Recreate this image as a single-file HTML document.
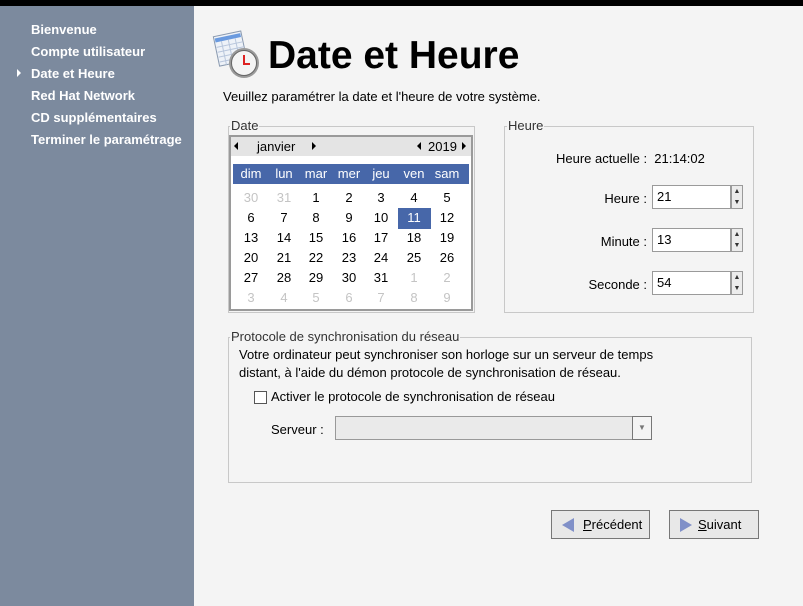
<!DOCTYPE html>
<html><head><meta charset="utf-8"><style>
*{margin:0;padding:0;box-sizing:border-box}
body{width:803px;height:606px;overflow:hidden;background:#f4f4f4;font-family:"Liberation Sans","DejaVu Sans",sans-serif;font-size:13px;color:#000;position:relative}
.a{position:absolute}
#top{left:0;top:0;width:803px;height:6px;background:#000}
#side{left:0;top:6px;width:194px;height:600px;background:#7c8a9e}
.si{position:absolute;left:31px;color:#fff;font-weight:bold;font-size:13px;font-family:"Liberation Sans",sans-serif}
.fr{position:absolute;border:1px solid #c8c8c8}
.lg{position:absolute;background:#f4f4f4;padding:0 1px;color:#333;font-size:13px;line-height:14px}
.c{position:absolute;width:32px;text-align:center;font-size:13px;line-height:20px}
.g{color:#c4c4c4}
.sp{position:absolute;left:652px;width:79px;height:24px;background:#fff;border:1px solid #9a9a9a;padding:3px 4px;font-size:13px}
.sb{position:absolute;left:731px;width:12px;height:24px;border:1px solid #9a9a9a;background:#ececec;font-size:7px;line-height:11px;text-align:center;color:#333}
.lb{position:absolute;width:160px;text-align:right;left:487px;font-size:13px}
.btn{position:absolute;height:29px;border:1px solid #777;background:#e8e8e8;font-size:13px;line-height:27px}
</style></head><body>
<div id="top" class="a"></div>
<div id="side" class="a"></div>
<div class="si" style="top:22px">Bienvenue</div>
<div class="si" style="top:44px">Compte utilisateur</div>
<div class="si" style="top:66px">Date et Heure</div>
<div class="a" style="left:17px;top:69px;width:0;height:0;border-left:4px solid #fff;border-top:4px solid transparent;border-bottom:4px solid transparent"></div>
<div class="si" style="top:88px">Red Hat Network</div>
<div class="si" style="top:110px">CD supplémentaires</div>
<div class="si" style="top:132px">Terminer le paramétrage</div>

<svg class="a" style="left:210px;top:28px" width="52" height="52" viewBox="0 0 52 52">
<g transform="rotate(-12 18 20)"><rect x="6" y="6" width="28" height="30" fill="#eef2f8" stroke="#8a9ab0"/><rect x="7" y="8" width="26" height="4" fill="#6a9adf"/>
<g stroke="#b8c6dc" stroke-width="1"><line x1="7" y1="17" x2="33" y2="17"/><line x1="7" y1="22" x2="33" y2="22"/><line x1="7" y1="27" x2="33" y2="27"/><line x1="7" y1="32" x2="33" y2="32"/><line x1="13" y1="12" x2="13" y2="36"/><line x1="20" y1="12" x2="20" y2="36"/><line x1="27" y1="12" x2="27" y2="36"/></g></g>
<circle cx="34" cy="35" r="15" fill="#9a9a9a"/><circle cx="34" cy="35" r="12.5" fill="#f4f4f4" stroke="#666"/>
<path d="M34 27 V36 H40" stroke="#d22" stroke-width="2" fill="none"/>
</svg>
<div class="a" style="left:268px;top:34px;font-size:39px;font-weight:bold;font-family:'Liberation Sans',sans-serif;line-height:44px">Date et Heure</div>
<div class="a" style="left:223px;top:89px;font-size:13px">Veuillez paramétrer la date et l'heure de votre système.</div>

<div class="fr" style="left:228px;top:126px;width:247px;height:187px"></div>
<div class="lg" style="left:230px;top:119px">Date</div>
<div class="a" style="left:229px;top:135px;width:244px;height:176px;background:#fff;border:2px solid #9a9a9a"></div>
<div class="a" style="left:231px;top:137px;width:240px;height:19px;background:#e4e4e4"></div>
<div class="a" style="left:234px;top:142px;border-right:4px solid #000;border-top:4px solid transparent;border-bottom:4px solid transparent"></div>
<div class="a" style="left:257px;top:139px">janvier</div>
<div class="a" style="left:312px;top:142px;border-left:4px solid #000;border-top:4px solid transparent;border-bottom:4px solid transparent"></div>
<div class="a" style="left:417px;top:142px;border-right:4px solid #000;border-top:4px solid transparent;border-bottom:4px solid transparent"></div>
<div class="a" style="left:428px;top:139px">2019</div>
<div class="a" style="left:462px;top:142px;border-left:4px solid #000;border-top:4px solid transparent;border-bottom:4px solid transparent"></div>
<div class="a" style="left:233px;top:164px;width:236px;height:20px;background:#4767a9"></div>
<div class="a" style="left:398px;top:208px;width:33px;height:21px;background:#4767a9"></div>
<div id="cal"></div>

<div class="fr" style="left:504px;top:126px;width:250px;height:187px"></div>
<div class="lg" style="left:507px;top:119px">Heure</div>
<div class="a" style="left:556px;top:151px">Heure actuelle :&nbsp; 21:14:02</div>
<div class="lb" style="top:191px">Heure :</div>
<div class="sp" style="top:185px">21</div><div class="sb" style="top:185px">▲<br>▼</div>
<div class="lb" style="top:234px">Minute :</div>
<div class="sp" style="top:228px">13</div><div class="sb" style="top:228px">▲<br>▼</div>
<div class="lb" style="top:277px">Seconde :</div>
<div class="sp" style="top:271px">54</div><div class="sb" style="top:271px">▲<br>▼</div>

<div class="fr" style="left:228px;top:337px;width:524px;height:146px"></div>
<div class="lg" style="left:230px;top:330px">Protocole de synchronisation du réseau</div>
<div class="a" style="left:239px;top:346px;line-height:18px">Votre ordinateur peut synchroniser son horloge sur un serveur de temps<br>distant, à l'aide du démon protocole de synchronisation de réseau.</div>
<div class="a" style="left:254px;top:391px;width:13px;height:13px;border:1px solid #555;background:#fff"></div>
<div class="a" style="left:271px;top:389px">Activer le protocole de synchronisation de réseau</div>
<div class="a" style="left:271px;top:422px">Serveur :</div>
<div class="a" style="left:335px;top:416px;width:298px;height:24px;border:1px solid #999;background:#eaeaea"></div>
<div class="a" style="left:632px;top:416px;width:20px;height:24px;border:1px solid #777;background:#f4f4f4;font-size:8px;line-height:22px;text-align:center;color:#777">▼</div>

<div class="btn" style="left:551px;top:510px;width:99px"><span style="position:absolute;left:10px;top:7px;border-right:12px solid #8090c8;border-top:7px solid transparent;border-bottom:7px solid transparent"></span><span style="position:absolute;left:31px"><u>P</u>récédent</span></div>
<div class="btn" style="left:669px;top:510px;width:90px"><span style="position:absolute;left:10px;top:7px;border-left:12px solid #8090c8;border-top:7px solid transparent;border-bottom:7px solid transparent"></span><span style="position:absolute;left:28px"><u>S</u>uivant</span></div>

<script>
var xs=[251,284,316,349,381,414,447];var h=["dim","lun","mar","mer","jeu","ven","sam"];
var d=[[30,31,1,2,3,4,5],[6,7,8,9,10,11,12],[13,14,15,16,17,18,19],[20,21,22,23,24,25,26],[27,28,29,30,31,1,2],[3,4,5,6,7,8,9]];
var s="";for(var i=0;i<7;i++)s+='<div class="c" style="left:'+(xs[i]-16)+'px;top:164px;color:#fff">'+h[i]+'</div>';
for(var r=0;r<6;r++)for(i=0;i<7;i++){var g=(r==0&&i<2)||(r==4&&i>4)||r==5;var w=(r==1&&i==5);
s+='<div class="c'+(g?' g':'')+'" style="left:'+(xs[i]-16)+'px;top:'+(188+r*20)+'px'+(w?';color:#fff':'')+'">'+d[r][i]+'</div>';}
document.getElementById("cal").innerHTML=s;
</script>
</body></html>
